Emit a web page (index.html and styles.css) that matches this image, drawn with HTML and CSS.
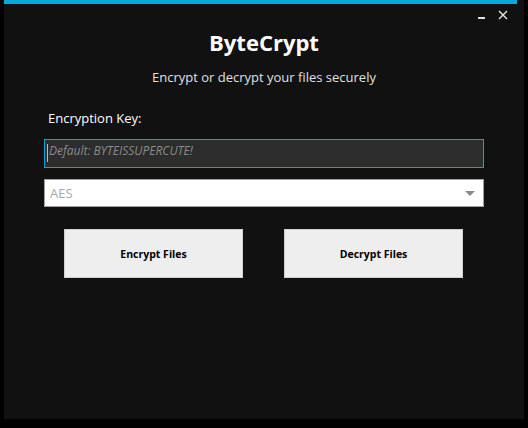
FILE: index.html
```html
<!DOCTYPE html>
<html>
<head>
<meta charset="utf-8">
<link rel="stylesheet" href="styles.css">
</head>
<body>
<div class="window">
  <div class="accent"></div>
  <div class="controls">
    <span class="min"></span>
    <svg class="close" width="10" height="10" viewBox="0 0 10 10"><path d="M1 1 L9 9 M9 1 L1 9" stroke="#e8e8e8" stroke-width="1.4" fill="none"/></svg>
  </div>
  <h1 class="title">ByteCrypt</h1>
  <p class="subtitle">Encrypt or decrypt your files securely</p>
  <div class="form">
    <label class="label">Encryption Key:</label>
    <div class="input"><span class="caret"></span><span class="placeholder">Default: BYTEISSUPERCUTE!</span></div>
    <div class="select"><span class="select-text">AES</span><span class="arrow"></span></div>
    <div class="buttons">
      <div class="btn">Encrypt Files</div>
      <div class="btn">Decrypt Files</div>
    </div>
  </div>
</div>
</body>
</html>
```

FILE: styles.css
```css
html, body {
  margin: 0;
  padding: 0;
  background: #000;
  width: 528px;
  height: 428px;
  overflow: hidden;
  font-family: "Open Sans", "Noto Sans", sans-serif;
}
.window {
  position: relative;
  margin-left: 4px;
  width: 520px;
  height: 419px;
  background: #111111;
  display: flex;
  flex-direction: column;
}
.accent {
  height: 4px;
  margin-right: 7px;
  background: #0aa8d8;
}
.controls {
  position: absolute;
  top: 10px;
  right: 16px;
  display: flex;
  align-items: center;
  gap: 13px;
}
.min {
  display: block;
  width: 7px;
  height: 2px;
  background: #e0e0e0;
  margin-top: 5px;
}
.close { display: block; }
.title {
  margin: 25px 0 0;
  text-align: center;
  color: #fff;
  font-size: 22px;
  font-weight: 700;
  line-height: 26px;
}
.subtitle {
  margin: 13px 0 0;
  text-align: center;
  color: #e0e0e0;
  font-size: 13px;
  line-height: 18px;
}
.form {
  display: flex;
  flex-direction: column;
  padding: 0 40px 0 40px;
}
.label {
  margin: 23px 0 0 4px;
  color: #fff;
  font-size: 13px;
  line-height: 18px;
}
.input {
  margin-top: 12px;
  height: 27px;
  border: 1px solid #0aa8d8;
  background: #2d2d2d;
  display: flex;
  align-items: center;
  padding-left: 2px;
}
.caret {
  width: 1px;
  height: 18px;
  background: #bbb;
  margin-right: 1px;
  margin-top: -2px;
}
.placeholder {
  color: #8a8a8a;
  font-style: italic;
  font-size: 12px;
  margin-top: -7px;
}
.select {
  margin-top: 11px;
  height: 26px;
  border: 1px solid #a0a0a0;
  background: #fff;
  display: flex;
  align-items: center;
  justify-content: space-between;
  padding: 0 8px 0 5px;
}
.select-text {
  color: #a8a8a8;
  font-size: 13px;
}
.arrow {
  width: 0;
  height: 0;
  border-left: 5px solid transparent;
  border-right: 5px solid transparent;
  border-top: 5px solid #8a8a8a;
  margin-top: 1px;
}
.buttons {
  margin-top: 22px;
  display: flex;
  gap: 41px;
  padding-left: 20px;
}
.btn {
  width: 177px;
  height: 47px;
  border: 1px solid #cfcfcf;
  background: #eeeeee;
  color: #000;
  font-size: 10.5px;
  font-weight: 700;
  display: flex;
  align-items: center;
  justify-content: center;
}
```
